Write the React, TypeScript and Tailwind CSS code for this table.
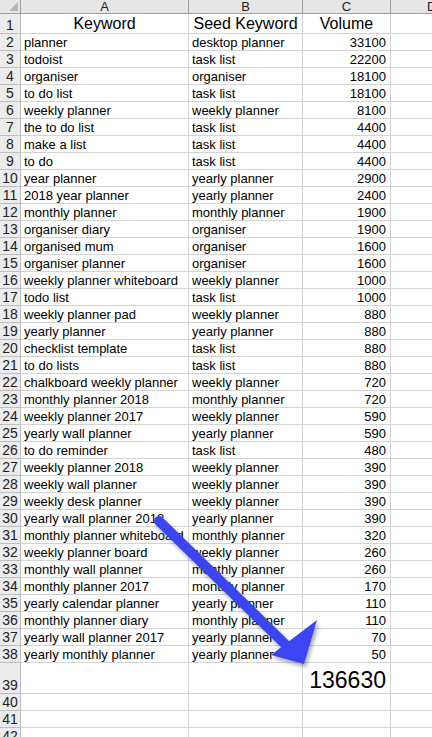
import React from "react";

type Row = [string, string, number];

const rows: Row[] = [
  ["planner", "desktop planner", 33100],
  ["todoist", "task list", 22200],
  ["organiser", "organiser", 18100],
  ["to do list", "task list", 18100],
  ["weekly planner", "weekly planner", 8100],
  ["the to do list", "task list", 4400],
  ["make a list", "task list", 4400],
  ["to do", "task list", 4400],
  ["year planner", "yearly planner", 2900],
  ["2018 year planner", "yearly planner", 2400],
  ["monthly planner", "monthly planner", 1900],
  ["organiser diary", "organiser", 1900],
  ["organised mum", "organiser", 1600],
  ["organiser planner", "organiser", 1600],
  ["weekly planner whiteboard", "weekly planner", 1000],
  ["todo list", "task list", 1000],
  ["weekly planner pad", "weekly planner", 880],
  ["yearly planner", "yearly planner", 880],
  ["checklist template", "task list", 880],
  ["to do lists", "task list", 880],
  ["chalkboard weekly planner", "weekly planner", 720],
  ["monthly planner 2018", "monthly planner", 720],
  ["weekly planner 2017", "weekly planner", 590],
  ["yearly wall planner", "yearly planner", 590],
  ["to do reminder", "task list", 480],
  ["weekly planner 2018", "weekly planner", 390],
  ["weekly wall planner", "weekly planner", 390],
  ["weekly desk planner", "weekly planner", 390],
  ["yearly wall planner 2018", "yearly planner", 390],
  ["monthly planner whiteboard", "monthly planner", 320],
  ["weekly planner board", "weekly planner", 260],
  ["monthly wall planner", "monthly planner", 260],
  ["monthly planner 2017", "monthly planner", 170],
  ["yearly calendar planner", "yearly planner", 110],
  ["monthly planner diary", "monthly planner", 110],
  ["yearly wall planner 2017", "yearly planner", 70],
  ["yearly monthly planner", "yearly planner", 50],
];

const grid = "grid grid-cols-[21px_168px_114px_88px_1fr]";
const cell = "border-r border-b border-[#d4d4d4] overflow-hidden whitespace-nowrap";
const rowNum =
  "border-r border-b border-[#bdbdbd] bg-[#ececec] text-[14px] text-[#222] flex items-end justify-center leading-[16px]";

function Arrow() {
  return (
    <svg
      className="absolute left-0 top-0 pointer-events-none"
      width="432"
      height="737"
      viewBox="0 0 432 737"
      style={{ filter: "drop-shadow(2px 3px 2px rgba(0,0,0,0.35))" }}
    >
      <line x1="159" y1="521" x2="286" y2="645" stroke="#3b46f2" strokeWidth="10" strokeLinecap="round" />
      <polygon points="304,664 271,655 317,620" fill="#3b46f2" />
    </svg>
  );
}

export default function App() {
  return (
    <div
      className="relative w-[432px] h-[737px] overflow-hidden bg-white text-black"
      style={{ fontFamily: "'Liberation Sans', Arial, sans-serif" }}
    >
      {/* column letters */}
      <div className={`${grid} h-[14px] bg-[#e6e6e6] text-[13px] text-[#222] leading-[13px]`}>
        <div className="border-r border-b border-[#9e9e9e] relative">
          <div className="absolute right-[2px] bottom-[2px] w-0 h-0 border-l-[9px] border-l-transparent border-b-[9px] border-b-[#b7b7b7]" />
        </div>
        <div className="border-r border-b border-[#9e9e9e] text-center">A</div>
        <div className="border-r border-b border-[#9e9e9e] text-center">B</div>
        <div className="border-r border-b border-[#9e9e9e] text-center">C</div>
        <div className="border-b border-[#9e9e9e] pl-[36px]">D</div>
      </div>

      {/* header row */}
      <div className={`${grid} h-[20px]`}>
        <div className={rowNum}>1</div>
        <div className={`${cell} text-[16px] leading-[18px] flex items-end justify-center`}>Keyword</div>
        <div className={`${cell} text-[16px] leading-[18px] flex items-end justify-center`}>Seed Keyword</div>
        <div className={`${cell} text-[16px] leading-[18px] flex items-end justify-center`}>Volume</div>
        <div className="border-b border-[#d4d4d4]" />
      </div>

      {rows.map(([kw, seed, vol], i) => (
        <div key={i} className={`${grid} h-[17px] text-[13px] leading-[15px]`}>
          <div className={rowNum}>{i + 2}</div>
          <div className={`${cell} px-[3px] flex items-end`}>{kw}</div>
          <div className={`${cell} px-[3px] flex items-end`}>{seed}</div>
          <div className={`${cell} px-[4px] flex items-end justify-end`}>{vol}</div>
          <div className="border-b border-[#d4d4d4]" />
        </div>
      ))}

      {/* total */}
      <div className={`${grid} h-[31px]`}>
        <div className={rowNum}>39</div>
        <div className={cell} />
        <div className={cell} />
        <div className={`${cell} px-[4px] flex items-end justify-end text-[23px] leading-[26px]`}>136630</div>
        <div className="border-b border-[#d4d4d4]" />
      </div>

      {[40, 41, 42].map((n) => (
        <div key={n} className={`${grid} h-[17px]`}>
          <div className={rowNum}>{n}</div>
          <div className={cell} />
          <div className={cell} />
          <div className={cell} />
          <div className="border-b border-[#d4d4d4]" />
        </div>
      ))}

      <Arrow />
    </div>
  );
}
